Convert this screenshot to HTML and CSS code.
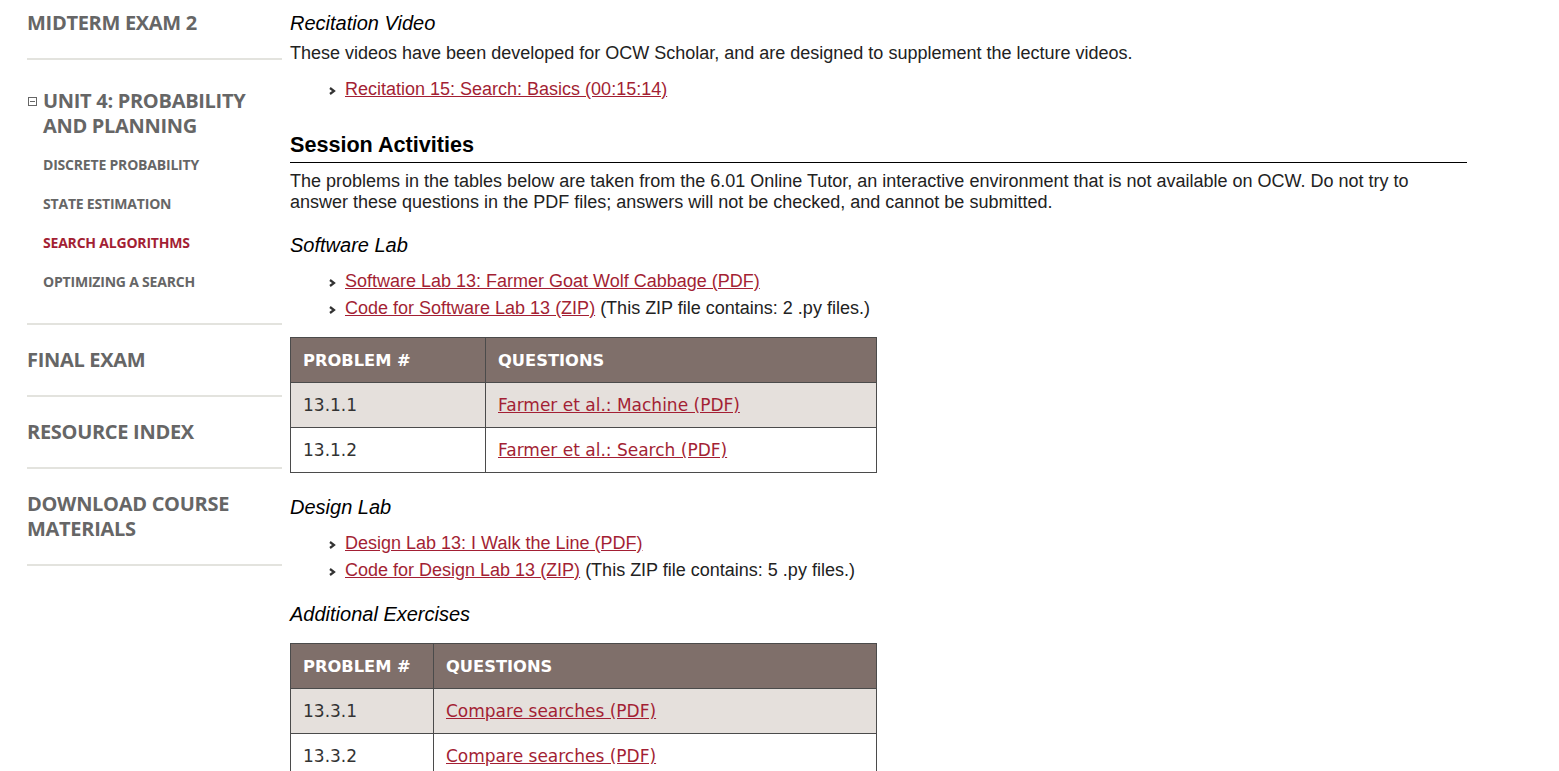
FILE: index.html
```html
<!DOCTYPE html>
<html lang="en">
<head>
<meta charset="utf-8">
<title>Search Algorithms</title>
<link rel="stylesheet" href="styles.css">
</head>
<body>
<div class="page">
  <nav class="sidebar">
    <div class="nav-item"><a class="nav-link">MIDTERM EXAM 2</a></div>
    <div class="nav-item nav-unit">
      <div class="unit-head">
        <span class="toggle"><span class="toggle-bar"></span></span>
        <a class="nav-link">UNIT 4: PROBABILITY AND PLANNING</a>
      </div>
      <ul class="sub-list">
        <li><a class="sub-link">DISCRETE PROBABILITY</a></li>
        <li><a class="sub-link">STATE ESTIMATION</a></li>
        <li><a class="sub-link active">SEARCH ALGORITHMS</a></li>
        <li><a class="sub-link">OPTIMIZING A SEARCH</a></li>
      </ul>
    </div>
    <div class="nav-item"><a class="nav-link">FINAL EXAM</a></div>
    <div class="nav-item"><a class="nav-link">RESOURCE INDEX</a></div>
    <div class="nav-item"><a class="nav-link">DOWNLOAD COURSE MATERIALS</a></div>
  </nav>

  <main class="content">
    <h3 class="sub-head first">Recitation Video</h3>
    <p class="text intro">These videos have been developed for OCW Scholar, and are designed to supplement the lecture videos.</p>
    <ul class="arrow-list video-list">
      <li><svg class="chev" width="9" height="10" viewBox="0 0 9 10"><polyline points="2,2 6,5 2,8" fill="none" stroke="#333" stroke-width="2.2"/></svg><a class="link" href="#">Recitation 15: Search: Basics (00:15:14)</a></li>
    </ul>

    <h2 class="section-head">Session Activities</h2>
    <p class="text activities">The problems in the tables below are taken from the 6.01 Online Tutor, an interactive environment that is not available on OCW. Do not try to answer these questions in the PDF files; answers will not be checked, and cannot be submitted.</p>

    <h3 class="sub-head sw">Software Lab</h3>
    <ul class="arrow-list">
      <li><svg class="chev" width="9" height="10" viewBox="0 0 9 10"><polyline points="2,2 6,5 2,8" fill="none" stroke="#333" stroke-width="2.2"/></svg><a class="link" href="#">Software Lab 13: Farmer Goat Wolf Cabbage (PDF)</a></li>
      <li><svg class="chev" width="9" height="10" viewBox="0 0 9 10"><polyline points="2,2 6,5 2,8" fill="none" stroke="#333" stroke-width="2.2"/></svg><a class="link" href="#">Code for Software Lab 13 (ZIP)</a> (This ZIP file contains: 2 .py files.)</li>
    </ul>

    <table class="prob-table t1">
      <thead>
        <tr><th class="c1">PROBLEM #</th><th>QUESTIONS</th></tr>
      </thead>
      <tbody>
        <tr class="shade"><td>13.1.1</td><td><a class="link" href="#">Farmer et al.: Machine (PDF)</a></td></tr>
        <tr><td>13.1.2</td><td><a class="link" href="#">Farmer et al.: Search (PDF)</a></td></tr>
      </tbody>
    </table>

    <h3 class="sub-head dl">Design Lab</h3>
    <ul class="arrow-list">
      <li><svg class="chev" width="9" height="10" viewBox="0 0 9 10"><polyline points="2,2 6,5 2,8" fill="none" stroke="#333" stroke-width="2.2"/></svg><a class="link" href="#">Design Lab 13: I Walk the Line (PDF)</a></li>
      <li><svg class="chev" width="9" height="10" viewBox="0 0 9 10"><polyline points="2,2 6,5 2,8" fill="none" stroke="#333" stroke-width="2.2"/></svg><a class="link" href="#">Code for Design Lab 13 (ZIP)</a> (This ZIP file contains: 5 .py files.)</li>
    </ul>

    <h3 class="sub-head ae">Additional Exercises</h3>
    <table class="prob-table t2">
      <thead>
        <tr><th class="c1">PROBLEM #</th><th>QUESTIONS</th></tr>
      </thead>
      <tbody>
        <tr class="shade"><td>13.3.1</td><td><a class="link" href="#">Compare searches (PDF)</a></td></tr>
        <tr><td>13.3.2</td><td><a class="link" href="#">Compare searches (PDF)</a></td></tr>
      </tbody>
    </table>
  </main>
</div>
</body>
</html>
```

FILE: styles.css
```css
html, body {
  margin: 0;
  padding: 0;
  background: #fff;
}

body {
  font-family: "Liberation Sans", Arial, sans-serif;
  color: #222;
  overflow: hidden;
}

.page {
  display: flex;
  align-items: flex-start;
  padding-left: 27px;
}

/* Sidebar */
.sidebar {
  width: 255px;
  flex: none;
  margin-top: -12px;
  font-family: "Open Sans", "DejaVu Sans", sans-serif;
  font-stretch: 100%;
}

.nav-item {
  padding: 22px 0 23px;
  border-bottom: 2px solid #e3e3de;
}

.nav-link {
  display: block;
  font-size: 20px;
  line-height: 25px;
  font-weight: 700;
  color: #666;
  letter-spacing: -0.3px;
}

.nav-item:last-child .nav-link {
  width: 215px;
}

.nav-unit {
  padding-top: 28px;
  padding-bottom: 22px;
}

.unit-head {
  display: flex;
  align-items: flex-start;
}

.unit-head .nav-link {
  width: 215px;
}

.toggle {
  width: 9px;
  height: 9px;
  box-sizing: border-box;
  border: 1px solid #666;
  margin: 9px 6px 0 1px;
  flex: none;
  display: flex;
  align-items: center;
  justify-content: center;
}

.toggle-bar {
  width: 5px;
  height: 1px;
  background: #666;
}

.sub-list {
  list-style: none;
  margin: 7px 0 0;
  padding: 0 0 0 16px;
}

.sub-list li {
  height: 39px;
  line-height: 39px;
}

.sub-link {
  font-size: 14px;
  font-weight: 700;
  color: #666;
  letter-spacing: -0.2px;
}

.sub-link.active {
  color: #a31f34;
}

/* Main content */
.content {
  width: 1177px;
  margin-left: 8px;
  flex: none;
}

.sub-head {
  font-size: 20px;
  line-height: 24px;
  font-style: italic;
  font-weight: normal;
  color: #000;
  margin: 0;
}

.sub-head.first { margin-top: 11px; }
.sub-head.sw { margin-top: 20px; }
.sub-head.dl { margin-top: 22px; }
.sub-head.ae { margin-top: 18px; }

.text {
  font-size: 18px;
  line-height: 21px;
  margin: 0;
}

.intro { margin-top: 8px; }

.activities { margin-top: 8px; }

.section-head {
  font-size: 21.6px;
  line-height: 24px;
  font-weight: bold;
  color: #000;
  margin: 30px 0 0;
  padding-bottom: 5px;
  border-bottom: 1px solid #000;
}

.arrow-list {
  list-style: none;
  margin: 11px 0 0;
  padding: 0 0 0 38px;
}

.video-list { margin-top: 12px; }

.arrow-list li {
  font-size: 18px;
  line-height: 27px;
  color: #222;
}

.chev {
  margin-right: 8px;
  vertical-align: -1px;
}

.link {
  color: #a31f34;
  text-decoration: underline;
}

/* Tables */
.prob-table {
  width: 587px;
  border-collapse: collapse;
  margin-top: 15px;
  font-family: "DejaVu Sans", Verdana, sans-serif;
  font-size: 17px;
}

.t2 { margin-top: 17px; }

.prob-table th,
.prob-table td {
  border: 1px solid #4b4b4b;
  height: 44px;
  padding: 0 12px;
  text-align: left;
  vertical-align: middle;
}

.prob-table th {
  background: #7f6f6a;
  color: #fff;
  font-weight: bold;
  font-size: 16.3px;
}

.prob-table td {
  color: #333;
}

.prob-table tr.shade td {
  background: #e5e0dc;
}

.t1 .c1 { width: 170px; }
.t2 .c1 { width: 118px; }
```
